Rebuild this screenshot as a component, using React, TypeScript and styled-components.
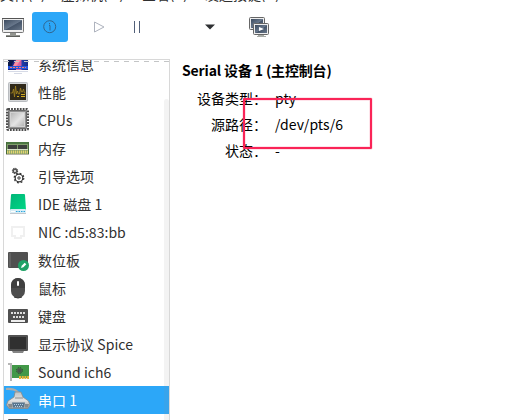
import React from "react";
import styled, { createGlobalStyle } from "styled-components";

const GlobalStyle = createGlobalStyle`
  * { box-sizing: border-box; }
  body {
    margin: 0;
    background: #fff;
    overflow: hidden;
    font-family: "Noto Sans CJK SC", "Noto Sans", sans-serif;
    font-size: 14px;
    color: #303030;
  }
`;

const Window = styled.div`
  width: 524px;
  height: 420px;
  display: flex;
  flex-direction: column;
  overflow: hidden;
  background: #fff;
`;

const MenuBar = styled.nav`
  height: 2px;
  flex: none;
  display: flex;
  align-items: flex-end;
  overflow: hidden;
`;

const MenuItem = styled.span<{ $width: number }>`
  flex: none;
  width: ${(p) => p.$width}px;
  line-height: 20px;
  margin-bottom: -2px;
  white-space: nowrap;
`;

const Toolbar = styled.header`
  height: 57px;
  flex: none;
  display: flex;
  align-items: flex-start;
  padding-top: 10px;
`;

const ToolButton = styled.button<{ $width: number; $active?: boolean }>`
  width: ${(p) => p.$width}px;
  height: 30px;
  flex: none;
  padding: 0;
  border: 0;
  border-radius: 3px;
  background: ${(p) => (p.$active ? "#2ca7f8" : "transparent")};
  display: flex;
  align-items: center;
  justify-content: center;
`;

const Gap = styled.div<{ $width: number }>`
  width: ${(p) => p.$width}px;
  flex: none;
`;

const Body = styled.main`
  flex: 1;
  min-height: 0;
  display: flex;
  padding-left: 3px;
`;

const Sidebar = styled.aside`
  position: relative;
  width: 167px;
  flex: none;
  display: flex;
  border: 1px solid #d8d8d8;
  border-bottom: 0;
  overflow: hidden;
`;

const HardwareList = styled.ul`
  list-style: none;
  flex: 1;
  margin: -10px 0 0;
  padding: 0;
`;

const OverflowLine = styled.div`
  position: absolute;
  top: 1px;
  left: 0;
  right: 0;
  height: 1px;
  background: repeating-linear-gradient(90deg, #c3c5c6 0 5px, transparent 5px 10px);
`;

const ScrollTrack = styled.div`
  position: absolute;
  top: 39px;
  right: 0;
  width: 5px;
  bottom: 0;
  border-radius: 3px 3px 0 0;
  background: rgba(150, 150, 150, 0.11);
`;

const HardwareRow = styled.li<{ $selected?: boolean }>`
  height: 28px;
  display: flex;
  align-items: center;
  padding-left: 1px;
  gap: 7px;
  white-space: nowrap;
  color: ${(p) => (p.$selected ? "#fff" : "#303030")};
  background: ${(p) => (p.$selected ? "#2ca7f8" : "transparent")};
`;

const RowLabel = styled.span`
  line-height: 20px;
  letter-spacing: 0.04px;
`;

const Glyph = styled.svg`
  display: block;
  flex: none;
`;

const Details = styled.section`
  flex: 1;
  padding: 1px 0 0 12px;
  color: #000;
`;

const Title = styled.h1`
  margin: 0;
  font-size: 14px;
  line-height: 20px;
  font-weight: 700;
  letter-spacing: -0.15px;
  white-space: nowrap;
`;

const Fields = styled.dl`
  margin: 5px 0 0;
  display: grid;
  grid-template-columns: 85px auto;
  grid-auto-rows: 26px;
  column-gap: 8px;
  line-height: 26px;
`;

const FieldName = styled.dt`
  text-align: right;
  white-space: nowrap;
`;

const FieldValue = styled.dd`
  margin: 0;
  letter-spacing: 0.08px;
`;

const Highlight = styled.div`
  position: absolute;
  left: 243px;
  top: 98px;
  width: 129px;
  height: 51px;
  border: 2px solid #fa2457;
  border-radius: 1px;
  box-shadow: 0 0 0 0.5px rgba(250, 36, 87, 0.25), inset 0 0 0 0.5px rgba(250, 36, 87, 0.25);
`;

const icon = (children: React.ReactNode) => (
  <Glyph width="26" height="28" viewBox="0 0 26 28">{children}</Glyph>
);

const SystemIcon = () => icon(
  <>
    <defs>
      <linearGradient id="wall" x1="0" x2="1">
        <stop offset="0" stopColor="#17247c" /><stop offset=".38" stopColor="#232a84" />
        <stop offset=".4" stopColor="#ee6f9f" /><stop offset=".65" stopColor="#c95aa3" />
        <stop offset=".7" stopColor="#1e3daa" /><stop offset="1" stopColor="#142b88" />
      </linearGradient>
    </defs>
    <rect x="3" y="5" width="20" height="15" fill="url(#wall)" />
    <path d="M3 10l6 0-3 7H3z" fill="#0d1a4c" />
    <path d="M12 8l4 2-5 6H8z" fill="#ff8c9e" />
    <rect x="3" y="16" width="20" height="3" fill="#2354dc" />
    <path d="M5 17.5h16" stroke="#fb7b71" strokeDasharray="2 1" />
    <path d="M3 21.5h20M9 23.5h8" stroke="#d6dae6" />
  </>
);

const PerformanceIcon = () => icon(
  <>
    <rect x="3.5" y="4.5" width="19" height="19" rx="1" fill="#d4d6d8" stroke="#b9bcc0" />
    <rect x="5" y="6" width="16" height="16" fill="#30291a" />
    <path d="M5.5 15h2l1-4 1 8 1-11 1 8 1-3 1 3h1l1-6 1 4h1l1-3 1 4h1" fill="none" stroke="#a5841e" strokeWidth=".8" />
    <path d="M12 18.5h2M16 16.5h4M16 18.5h4" stroke="#d0a91f" />
  </>
);

const CpuIcon = () => icon(
  <>
    <defs>
      <linearGradient id="chip" x1="0" y1="0" x2="1" y2="1">
        <stop offset="0" stopColor="#b4b4b4" /><stop offset=".55" stopColor="#e4e4e4" /><stop offset="1" stopColor="#b0b0b0" />
      </linearGradient>
    </defs>
    <rect x="2.2" y="3.2" width="20.6" height="20.6" rx="1" fill="none" stroke="#4c4c4c" strokeWidth="2.4" strokeDasharray="1.8 1.1" />
    <rect x="3.5" y="4.5" width="18" height="18" rx="1" fill="#929292" stroke="#686868" />
    <rect x="5.5" y="6.5" width="14" height="14" fill="url(#chip)" stroke="#d2d2d2" />
  </>
);

const MemoryIcon = () => icon(
  <>
    <rect x="1" y="8" width="23" height="12" fill="#7f9d6a" />
    <rect x="1" y="8" width="23" height="2" fill="#4b7842" />
    <rect x="3" y="11" width="9" height="4" fill="#3c403d" />
    <rect x="13" y="11" width="9" height="4" fill="#3c403d" />
    <path d="M2 15.5h21" stroke="#d6e2c8" />
    <path d="M2 18h22" stroke="#e3d472" strokeWidth="3" strokeDasharray="1.3 .7" />
    <path d="M1.5 8v12M23.5 8v12" stroke="#476b3c" />
    <path d="M1 20.5h23" stroke="#b8b5aa" />
  </>
);

const BootIcon = () => icon(
  <>
    <circle cx="10" cy="9" r="1.7" fill="none" stroke="#555" strokeWidth="1.5" />
    <circle cx="10" cy="9" r="2.6" fill="none" stroke="#4c4c4c" strokeWidth="1.2" strokeDasharray="1.2 .84" />
    <circle cx="14" cy="16" r="3.8" fill="#fff" stroke="#333" strokeWidth="1.2" />
    <circle cx="14" cy="16" r="4.8" fill="none" stroke="#333" strokeWidth="1.2" strokeDasharray="1.9 1.87" />
    <circle cx="14" cy="16" r="1.2" fill="#fff" stroke="#333" />
  </>
);

const DiskIcon = () => icon(
  <>
    <defs><linearGradient id="disk" x1="0" y1="0" x2="1" y2="1"><stop stopColor="#00b477" /><stop offset="1" stopColor="#00d785" /></linearGradient></defs>
    <path d="M7 4h12q1 0 1 1l1 15H5L6 5q0-1 1-1z" fill="url(#disk)" />
    <rect x="5" y="19" width="16" height="4" rx="1" fill="#d7edf5" />
    <path d="M6 21.5h4" stroke="#fff" />
    <path d="M11 21.5h9" stroke="#2aa7e0" strokeDasharray="1.5 1" />
    <path d="M5 23.5h16" stroke="#c2c8ce" />
  </>
);

const NetworkIcon = () => icon(
  <path d="M7 9h12v9h-3v2h-6v-2H7z" fill="none" stroke="#f0f0f0" strokeWidth="2" />
);

const TabletIcon = () => icon(
  <>
    <rect x="3" y="6" width="20" height="16" rx="1" fill="#505050" />
    <rect x="4" y="7" width="2" height="14" fill="#626262" />
    <circle cx="18.5" cy="19.5" r="5.5" fill="#20a267" />
    <path d="M16 22l.7-2.3 3-3 1.6 1.6-3 3z" fill="#fff" />
  </>
);

const MouseIcon = () => icon(
  <>
    <rect x="6" y="4" width="14" height="20" rx="7" fill="#4d4d4d" />
    <path d="M6 14v-3a7 7 0 0 1 14 0v3z" fill="#404040" />
    <rect x="12" y="7" width="2" height="5" rx="1" fill="#fff" />
    <path d="M9 23q4 2 8 0" fill="none" stroke="#333" />
  </>
);

const KeyboardIcon = () => icon(
  <>
    <rect x="3" y="7" width="20" height="14" rx="1" fill="#505050" />
    <path d="M6 11h14" stroke="#dedede" strokeWidth="2" strokeDasharray="2 1" />
    <path d="M8 15h12" stroke="#dedede" strokeWidth="2" strokeDasharray="2 1" />
    <path d="M6 19h14" stroke="#eee" strokeWidth="2" />
  </>
);

const DisplayIcon = () => icon(
  <>
    <rect x="3" y="5" width="20" height="16" rx="1" fill="#525252" />
    <rect x="5" y="7" width="16" height="12" fill="#303030" />
    <path d="M7 21h12l-1 2H8z" fill="#858585" />
  </>
);

const SoundIcon = () => icon(
  <>
    <path d="M3 5h4v18H5V7H3z" fill="#b5b5b5" />
    <rect x="7" y="7" width="17" height="13" fill="#429848" />
    <circle cx="14.5" cy="12.5" r="2.2" fill="#4c564d" />
    <circle cx="14.5" cy="12.5" r="2.9" fill="none" stroke="#303a32" strokeDasharray="1.3 .98" />
    <path d="M14 19.5h10" stroke="#e6b137" strokeWidth="3" strokeDasharray="2 .7" />
  </>
);

const SerialIcon = () => icon(
  <>
    <defs>
      <linearGradient id="plug" x1="0" y1="0" x2="0" y2="1">
        <stop stopColor="#c0c3c3" /><stop offset=".5" stopColor="#e2e3e3" /><stop offset="1" stopColor="#9fa3a4" />
      </linearGradient>
    </defs>
    <path d="M1 3q8-.5 11 2.5 2 1.5 2 3" fill="none" stroke="#a9adae" strokeWidth="2.2" />
    <path d="M10 6h6l2 5 5.5 4 1.5 4-2 3.5H4L1.500 19 3 15l6-4z" fill="url(#plug)" stroke="#858a8b" strokeWidth=".8" />
    <path d="M10 12h8" stroke="#8d9192" />
    <path d="M3 18h4v3.5H4zM24 18h-4v3.5h3z" fill="#858a8c" />
    <path d="M7 16.5h13l-1 5H8z" fill="#58758d" />
    <path d="M9 18.5h9M10 20.5h7" stroke="#b6d0e4" strokeDasharray="1 1" />
  </>
);

const hardware: { label: string; Icon: React.FC; selected?: boolean }[] = [
  { label: "系统信息", Icon: SystemIcon },
  { label: "性能", Icon: PerformanceIcon },
  { label: "CPUs", Icon: CpuIcon },
  { label: "内存", Icon: MemoryIcon },
  { label: "引导选项", Icon: BootIcon },
  { label: "IDE 磁盘 1", Icon: DiskIcon },
  { label: "NIC :d5:83:bb", Icon: NetworkIcon },
  { label: "数位板", Icon: TabletIcon },
  { label: "鼠标", Icon: MouseIcon },
  { label: "键盘", Icon: KeyboardIcon },
  { label: "显示协议 Spice", Icon: DisplayIcon },
  { label: "Sound ich6", Icon: SoundIcon },
  { label: "串口 1", Icon: SerialIcon, selected: true },
  { label: "", Icon: DisplayIcon },
];

const fields = [
  ["设备类型：", "pty"],
  ["源路径：", "/dev/pts/6"],
  ["状态：", "-"],
];

const ScreenGradient = () => (
  <defs>
    <linearGradient id="glass" x1="0" y1="0" x2="1" y2="1">
      <stop stopColor="#3c4b5f" /><stop offset=".5" stopColor="#68778b" /><stop offset=".55" stopColor="#46556a" /><stop offset="1" stopColor="#68778a" />
    </linearGradient>
  </defs>
);

const ConsoleIcon = () => (
  <Glyph width="26" height="26" viewBox="0 0 26 26">
    <ScreenGradient />
    <rect x="2.5" y="4.5" width="21" height="14" rx="1" fill="#eee" stroke="#777" />
    <path d="M2 4.5h22" stroke="#555" />
    <rect x="4" y="6" width="18" height="10" fill="url(#glass)" />
    <path d="M10 19h6v2h4v2H6v-2h4z" fill="#92948f" />
    <path d="M6 22.5h14" stroke="#5d5f5b" />
  </Glyph>
);

const InfoIcon = () => (
  <Glyph width="16" height="16" viewBox="0 0 16 16">
    <circle cx="7.7" cy="7.7" r="6" fill="none" stroke="#31658f" />
    <path d="M7 6.5h1v5M7.5 4v1.3" fill="none" stroke="#31658f" />
  </Glyph>
);

const PlayIcon = () => (
  <Glyph width="12" height="14" viewBox="0 0 12 14">
    <path d="M1.5 2v10L11 7z" fill="none" stroke="#aeb3be" />
  </Glyph>
);

const PauseIcon = () => (
  <Glyph width="8" height="14" viewBox="0 0 8 14">
    <path d="M1.5 1v12M6.5 1v12" stroke="#526079" />
  </Glyph>
);

const CaretIcon = () => (
  <Glyph width="10" height="6" viewBox="0 0 10 6">
    <path d="M0 .5h10L5 5.5z" fill="#2e3033" />
  </Glyph>
);

const FullscreenIcon = () => (
  <Glyph width="22" height="22" viewBox="0 0 22 22">
    <rect x="1.5" y="1.5" width="15" height="12" rx="1" fill="#eee" stroke="#666" />
    <rect x="3" y="3" width="12" height="9" fill="url(#glass)" />
    <rect x="5.5" y="7.5" width="15" height="11" rx="1" fill="#eee" stroke="#666" />
    <rect x="7" y="9" width="12" height="8" fill="url(#glass)" />
    <path d="M11 11l5 2-5 2z" fill="#fff" />
    <path d="M10 19h6v1h2v1H9v-1h1z" fill="#a9aca7" />
  </Glyph>
);

export default function App() {
  return (
    <Window>
      <GlobalStyle />
      <MenuBar>
        <MenuItem $width={61}>文件(F)</MenuItem>
        <MenuItem $width={81}>虚拟机(M)</MenuItem>
        <MenuItem $width={63}>查看(V)</MenuItem>
        <MenuItem $width={90}>发送按键(K)</MenuItem>
      </MenuBar>
      <Toolbar>
        <ToolButton $width={26}><ConsoleIcon /></ToolButton>
        <Gap $width={6} />
        <ToolButton $width={36} $active><InfoIcon /></ToolButton>
        <Gap $width={13} />
        <ToolButton $width={36}><PlayIcon /></ToolButton>
        <Gap $width={2} />
        <ToolButton $width={36}><PauseIcon /></ToolButton>
        <Gap $width={45} />
        <ToolButton $width={20}><CaretIcon /></ToolButton>
        <Gap $width={21} />
        <ToolButton $width={36}><FullscreenIcon /></ToolButton>
      </Toolbar>
      <Body>
        <Sidebar>
          <HardwareList>
            {hardware.map(({ label, Icon, selected }, i) => (
              <HardwareRow key={i} $selected={selected}>
                <Icon />
                <RowLabel>{label}</RowLabel>
              </HardwareRow>
            ))}
          </HardwareList>
          <OverflowLine />
          <ScrollTrack />
        </Sidebar>
        <Details>
          <Title>Serial 设备 1 (主控制台)</Title>
          <Fields>
            {fields.map(([name, value]) => (
              <React.Fragment key={name}>
                <FieldName>{name}</FieldName>
                <FieldValue>{value}</FieldValue>
              </React.Fragment>
            ))}
          </Fields>
        </Details>
      </Body>
      <Highlight />
    </Window>
  );
}
